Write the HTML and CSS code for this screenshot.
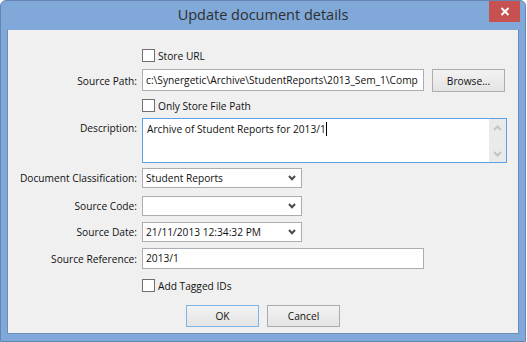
FILE: index.html
```html
<!DOCTYPE html>
<html lang="en">
<head>
  <meta charset="UTF-8">
  <title>Update document details</title>
  <link rel="stylesheet" href="styles.css">
</head>
<body>
  <div class="window">
    <div class="titlebar">
      <span class="title">Update document details</span>
      <span class="close">
        <svg width="10" height="9" viewBox="0 0 10 9"><path d="M1.5 1 L8.5 8 M8.5 1 L1.5 8" stroke="#fff" stroke-width="2"/></svg>
      </span>
    </div>

    <div class="client">
      <div class="row row-url">
        <span></span>
        <label class="check"><span class="box"></span>Store URL</label>
      </div>

      <div class="row row-path">
        <span class="label">Source Path:</span>
        <div class="path-line">
          <div class="field path">c:\Synergetic\Archive\StudentReports\2013_Sem_1\Comp</div>
          <button class="btn browse">Browse...</button>
        </div>
      </div>

      <div class="row row-only">
        <span></span>
        <label class="check"><span class="box"></span>Only Store File Path</label>
      </div>

      <div class="row row-desc">
        <span class="label top">Description:</span>
        <div class="memo">
          <div class="memo-text">Archive of Student Reports for 2013/1<span class="caret"></span></div>
          <div class="scroll">
            <svg width="9" height="6" viewBox="0 0 9 6"><path d="M1 5 L4.5 1.5 L8 5" fill="none" stroke="#c4c4c4" stroke-width="2"/></svg>
            <svg width="9" height="6" viewBox="0 0 9 6"><path d="M1 1 L4.5 4.5 L8 1" fill="none" stroke="#c4c4c4" stroke-width="2"/></svg>
          </div>
        </div>
      </div>

      <div class="row row-class">
        <span class="label">Document Classification:</span>
        <div class="combo"><span>Student Reports</span><svg class="chev" width="8" height="6" viewBox="0 0 8 6"><path d="M1 1 L4 4.2 L7 1" fill="none" stroke="#4a4a4a" stroke-width="2"/></svg></div>
      </div>

      <div class="row row-code">
        <span class="label">Source Code:</span>
        <div class="combo"><span></span><svg class="chev" width="8" height="6" viewBox="0 0 8 6"><path d="M1 1 L4 4.2 L7 1" fill="none" stroke="#4a4a4a" stroke-width="2"/></svg></div>
      </div>

      <div class="row row-date">
        <span class="label">Source Date:</span>
        <div class="combo"><span>21/11/2013 12:34:32 PM</span><svg class="chev" width="8" height="6" viewBox="0 0 8 6"><path d="M1 1 L4 4.2 L7 1" fill="none" stroke="#4a4a4a" stroke-width="2"/></svg></div>
      </div>

      <div class="row row-ref">
        <span class="label">Source Reference:</span>
        <div class="field ref">2013/1</div>
      </div>

      <div class="row row-tag">
        <span></span>
        <label class="check"><span class="box"></span>Add Tagged IDs</label>
      </div>

      <div class="actions">
        <button class="btn default">OK</button>
        <button class="btn">Cancel</button>
      </div>
    </div>
  </div>
</body>
</html>
```

FILE: styles.css
```css
:root {
  --frame: #80a8d8;
  --frame-edge: #6a8dba;
  --client: #f0f0f0;
  --field-border: #abadb3;
  --focus: #5ea0e6;
  --text: #111;
}

* {
  box-sizing: border-box;
  margin: 0;
  padding: 0;
}

body {
  font-family: 'Open Sans', 'Noto Sans', sans-serif;
  font-size: 10.2px;
  color: var(--text);
  background: #fff;
}

.window {
  width: 526px;
  height: 342px;
  background: var(--frame);
  border: 1px solid #6585b3;
  border-radius: 6px 6px 0 0;
  padding: 0 6px 7px 6px;
  display: flex;
  flex-direction: column;
}

.titlebar {
  height: 29px;
  display: flex;
  justify-content: center;
  align-items: center;
  position: relative;
}

.title {
  font-size: 14.5px;
  color: #2f2f2f;
  margin-top: -3px;
}

.close {
  position: absolute;
  right: -1px;
  top: 0;
  width: 31px;
  height: 21px;
  background: #c75050;
  display: flex;
  align-items: center;
  justify-content: center;
}

.client {
  flex: 1;
  background: var(--client);
  border: 1px solid var(--frame-edge);
  border-top: none;
  display: flex;
  flex-direction: column;
}

.row {
  display: grid;
  grid-template-columns: 129px 1fr;
  column-gap: 5px;
  align-items: center;
}

.label {
  text-align: right;
  white-space: nowrap;
}

.label.top {
  align-self: start;
  padding-top: 3px;
}

.check {
  display: flex;
  align-items: center;
  gap: 3px;
  height: 13px;
}

.box {
  width: 13px;
  height: 13px;
  border: 1px solid #707070;
  background: #fff;
}

.field,
.combo,
.memo {
  background: #fff;
  border: 1px solid var(--field-border);
  white-space: nowrap;
  overflow: hidden;
}

.field {
  height: 22px;
  line-height: 20px;
  padding-left: 3px;
}

.row-url { margin-top: 19px; }
.row-path { margin-top: 7px; }
.row-only { margin-top: 7px; }
.row-desc { margin-top: 6px; }
.row-class { margin-top: 5px; }
.row-code { margin-top: 8px; }
.row-date { margin-top: 6px; }
.row-ref { margin-top: 6px; }
.row-tag { margin-top: 10px; }

.path-line {
  display: flex;
  gap: 8px;
  align-items: flex-start;
}

.field.path {
  width: 282px;
}

.field.ref {
  width: 282px;
  height: 21px;
  line-height: 19px;
}

.memo {
  width: 365px;
  height: 45px;
  border-color: var(--focus);
  display: flex;
}

.memo-text {
  flex: 1;
  padding: 3px 4px;
}

.caret {
  display: inline-block;
  width: 1px;
  height: 14px;
  background: #000;
  vertical-align: -3px;
}

.scroll {
  width: 17px;
  background: #eaeaea;
  display: flex;
  flex-direction: column;
  justify-content: space-between;
  align-items: center;
  padding: 6px 0 5px;
}

.combo {
  width: 160px;
  height: 20px;
  display: flex;
  align-items: center;
  justify-content: space-between;
  padding: 0 5px 0 3px;
}

.btn {
  font-family: inherit;
  font-size: 10.2px;
  color: var(--text);
  height: 23px;
  border: 1px solid #acacac;
  background: linear-gradient(#f2f2f2, #e4e4e4);
}

.btn.browse {
  width: 73px;
}

.actions {
  display: flex;
  justify-content: center;
  gap: 8px;
  margin-top: 13px;
}

.actions .btn {
  width: 73px;
  height: 22px;
}

.btn.default {
  border-color: #7eb4ea;
}
```
